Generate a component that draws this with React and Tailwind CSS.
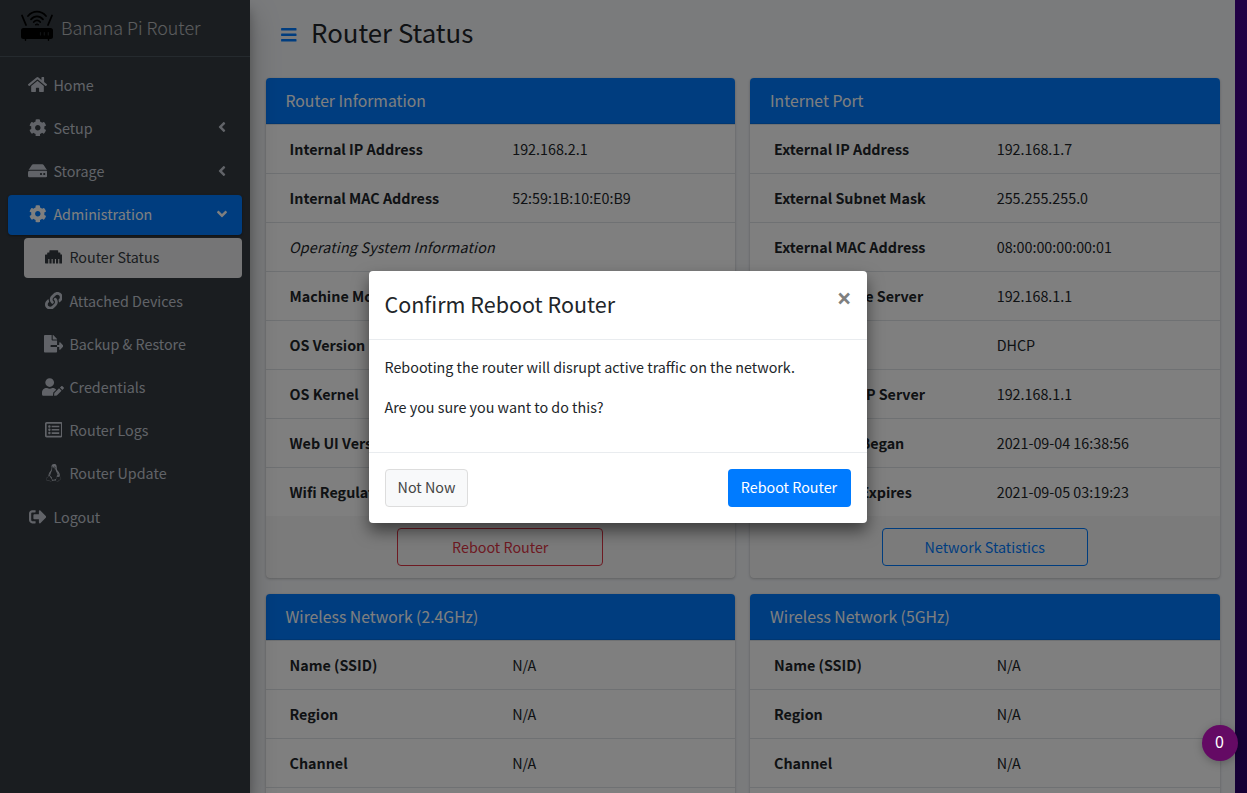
import { FaHome, FaCog, FaHdd, FaEthernet, FaLink, FaFileExport, FaUserEdit, FaRegListAlt, FaLinux, FaSignOutAlt, FaAngleLeft, FaAngleDown, FaBars } from "react-icons/fa";

function RouterLogo() {
  return (
    <svg width="34" height="32" viewBox="0 0 34 32" fill="none" stroke="#000" strokeLinecap="round">
      <rect x="1" y="18" width="32" height="11" rx="2.5" fill="#000" stroke="none" />
      <path d="M2 5.5 6 15M32 5.5 28 15" strokeWidth="1.8" />
      <path d="M8 6C13 0.200 21 0.200 26 6M11 9.300C14.500 5.300 19.500 5.300 23 9.300M13.800 12C15.700 9.900 18.300 9.900 20.200 12" strokeWidth="1.8" />
      <path d="M15.300 14.600Q17 12.800 18.700 14.600Z" fill="#000" strokeWidth="0.8" />
      <path d="M5.500 29v1.300M28.500 29v1.300" strokeWidth="1.400" />
      <path d="M20.500 22.500v2.500M24.300 22.500v2.500M28.300 22.500v2.500" stroke="#22262a" strokeWidth="1.200" />
    </svg>
  );
}

const nav = [
  { label: "Home", icon: FaHome, size: 19 },
  { label: "Setup", icon: FaCog, size: 17.6, arrow: true },
  { label: "Storage", icon: FaHdd, size: 19.5, arrow: true },
  { label: "Administration", icon: FaCog, size: 17.6, active: true },
  { label: "Router Status", icon: FaEthernet, size: 17.6, sub: true, active: true },
  { label: "Attached Devices", icon: FaLink, size: 17.6, sub: true },
  { label: "Backup & Restore", icon: FaFileExport, size: 19.6, sub: true },
  { label: "Credentials", icon: FaUserEdit, size: 22, sub: true },
  { label: "Router Logs", icon: FaRegListAlt, size: 17.6, sub: true },
  { label: "Router Update", icon: FaLinux, size: 17.6, sub: true },
  { label: "Logout", icon: FaSignOutAlt, size: 17.6 },
];

function NavItem({ label, icon: Icon, size, arrow, sub, active }) {
  const tone = active
    ? sub
      ? "bg-white/90 text-[#343a40]"
      : "bg-[#007bff] text-white shadow-[0_1px_3px_rgba(0,0,0,0.12),0_1px_2px_rgba(0,0,0,0.24)]"
    : "text-[#c2c7d0]";
  return (
    <li className={(sub ? "ml-4 " : "") + tone + " mb-[3.2px] flex h-10 items-center rounded pl-[16.200px] pr-3"}>
      <span className="mr-[2.800px] flex w-[26.400px] shrink-0 justify-center pb-px">
        <Icon size={size} />
      </span>
      <span className="flex-1 pb-[0.750px]">{label}</span>
      {arrow && <FaAngleLeft className="mb-[1.500px]" size={16} />}
      {active && !sub && <FaAngleDown className="mb-0.5" size={16} />}
    </li>
  );
}

function Card({ title, rows, button, continued }) {
  return (
    <section className="mb-4 rounded bg-white shadow-[0_0_1px_rgba(0,0,0,0.125),0_1px_3px_rgba(0,0,0,0.2)]">
      <h3 className="h-[46px] rounded-t border-b border-black/10 bg-[#007bff] pl-5 text-[15.750px] leading-[45px] text-white">{title}</h3>
      <dl>
        {rows.map(([name, value]) => (
          <div key={name} className="flex h-[49px] items-center border-t border-[#dee2e6] pl-6">
            {value ? (
              <>
                <dt className="w-[222.700px] shrink-0 font-bold">{name}</dt>
                <dd>{value}</dd>
              </>
            ) : (
              <dt className="-ml-[0.500px] tracking-[0.17px] italic">{name}</dt>
            )}
          </div>
        ))}
      </dl>
      {continued && <div className="h-12 border-t border-[#dee2e6]" />}
      {button && (
        <div className="flex justify-center rounded-b bg-black/3 py-3">
          <button className={button.tone + " h-[38px] w-[206px] rounded border"}>{button.label}</button>
        </div>
      )}
    </section>
  );
}

const wifi = [["Name (SSID)", "N/A"], ["Region", "N/A"], ["Channel", "N/A"]];

export default function App() {
  return (
    <div className="relative flex h-[793px] w-[1247px] overflow-hidden font-['Source_Sans_Pro','Noto_Sans_CJK_SC',sans-serif] text-[14.320px] leading-6 text-[#212529]">
      <aside className="z-10 w-[250px] shrink-0 bg-[#343a40] shadow-[0_14px_28px_rgba(0,0,0,0.25),0_10px_10px_rgba(0,0,0,0.22)]">
        <div className="flex h-[57px] items-start border-b border-[#4b545c] pl-5 pt-[10px]">
          <RouterLogo />
          <span className="ml-[7px] mt-[5px] text-[17.900px] font-light text-white/65">Banana Pi Router</span>
        </div>
        <ul className="px-2 pt-2">
          {nav.map((item) => <NavItem key={item.label} {...item} />)}
        </ul>
      </aside>
      <main className="w-[985px] shrink-0 bg-[#f4f6f9] px-[15.500px]">
        <header className="flex h-[78px] items-start pl-[14px] pt-[14px]">
          <FaBars className="mt-3 text-[#007bff]" size={17.6} />
          <h1 className="ml-[14px] text-[25.800px] leading-9">Router Status</h1>
        </header>
        <div className="grid grid-cols-2 gap-x-[15px]">
          <Card
            title="Router Information"
            rows={[
              ["Internal IP Address", "192.168.2.1"],
              ["Internal MAC Address", "52:59:1B:10:E0:B9"],
              ["Operating System Information"],
              ["Machine Model", "Banana Pi R2"],
              ["OS Version", "Ubuntu"],
              ["OS Kernel", "Linux"],
              ["Web UI Version", "1.0"],
              ["Wifi Regulatory", "US"],
            ]}
            button={{ label: "Reboot Router", tone: "border-[#dc3545] text-[#dc3545]" }}
          />
          <Card
            title="Internet Port"
            rows={[
              ["External IP Address", "192.168.1.7"],
              ["External Subnet Mask", "255.255.255.0"],
              ["External MAC Address", "08:00:00:00:00:01"],
              ["Domain Name Server", "192.168.1.1"],
              ["Connection", "DHCP"],
              ["External DHCP Server", "192.168.1.1"],
              ["DHCP Lease Began", "2021-09-04 16:38:56"],
              ["DHCP Lease Expires", "2021-09-05 03:19:23"],
            ]}
            button={{ label: "Network Statistics", tone: "border-[#007bff] text-[#007bff]" }}
          />
          <Card title="Wireless Network (2.4GHz)" rows={wifi} continued />
          <Card title="Wireless Network (5GHz)" rows={wifi} continued />
        </div>
      </main>
      <div className="w-3 shrink-0 bg-linear-to-b from-[#210045] to-[#150035]" />

      <div className="absolute inset-y-0 left-0 z-20 flex w-[1235px] items-center justify-center bg-black/50">
        <div role="dialog" className="mt-px w-[498px] rounded bg-white shadow-[0_8px_16px_rgba(0,0,0,0.5)]">
          <div className="flex h-[69px] items-start justify-between border-b border-[#e9ecef] px-4 pt-[15px]">
            <h4 className="text-[21.500px] leading-9">Confirm Reboot Router</h4>
            <button className="-mr-px font-['Noto_Sans'] text-[26px] font-bold leading-[25px] text-black/50">×</button>
          </div>
          <div className="h-28 px-4 pt-[15px]">
            <p className="mb-4">Rebooting the router will disrupt active traffic on the network.</p>
            <p>Are you sure you want to do this?</p>
          </div>
          <div className="flex justify-between border-t border-[#e9ecef] p-4">
            <button className="h-[38px] w-[83px] rounded border border-[#ddd] bg-[#f8f9fa] pb-0.5 pl-px text-[#444]">Not Now</button>
            <button className="h-[38px] w-[123px] rounded bg-[#007bff] pb-0.5 text-white">Reboot Router</button>
          </div>
        </div>
      </div>
      <div className="absolute left-[1202px] top-[725px] z-30 flex size-9 items-center justify-center rounded-full bg-[#640a64] pr-px pb-1 shadow-[0_2px_8px_rgba(0,0,0,0.25)] text-[16px] text-white">0</div>
    </div>
  );
}
